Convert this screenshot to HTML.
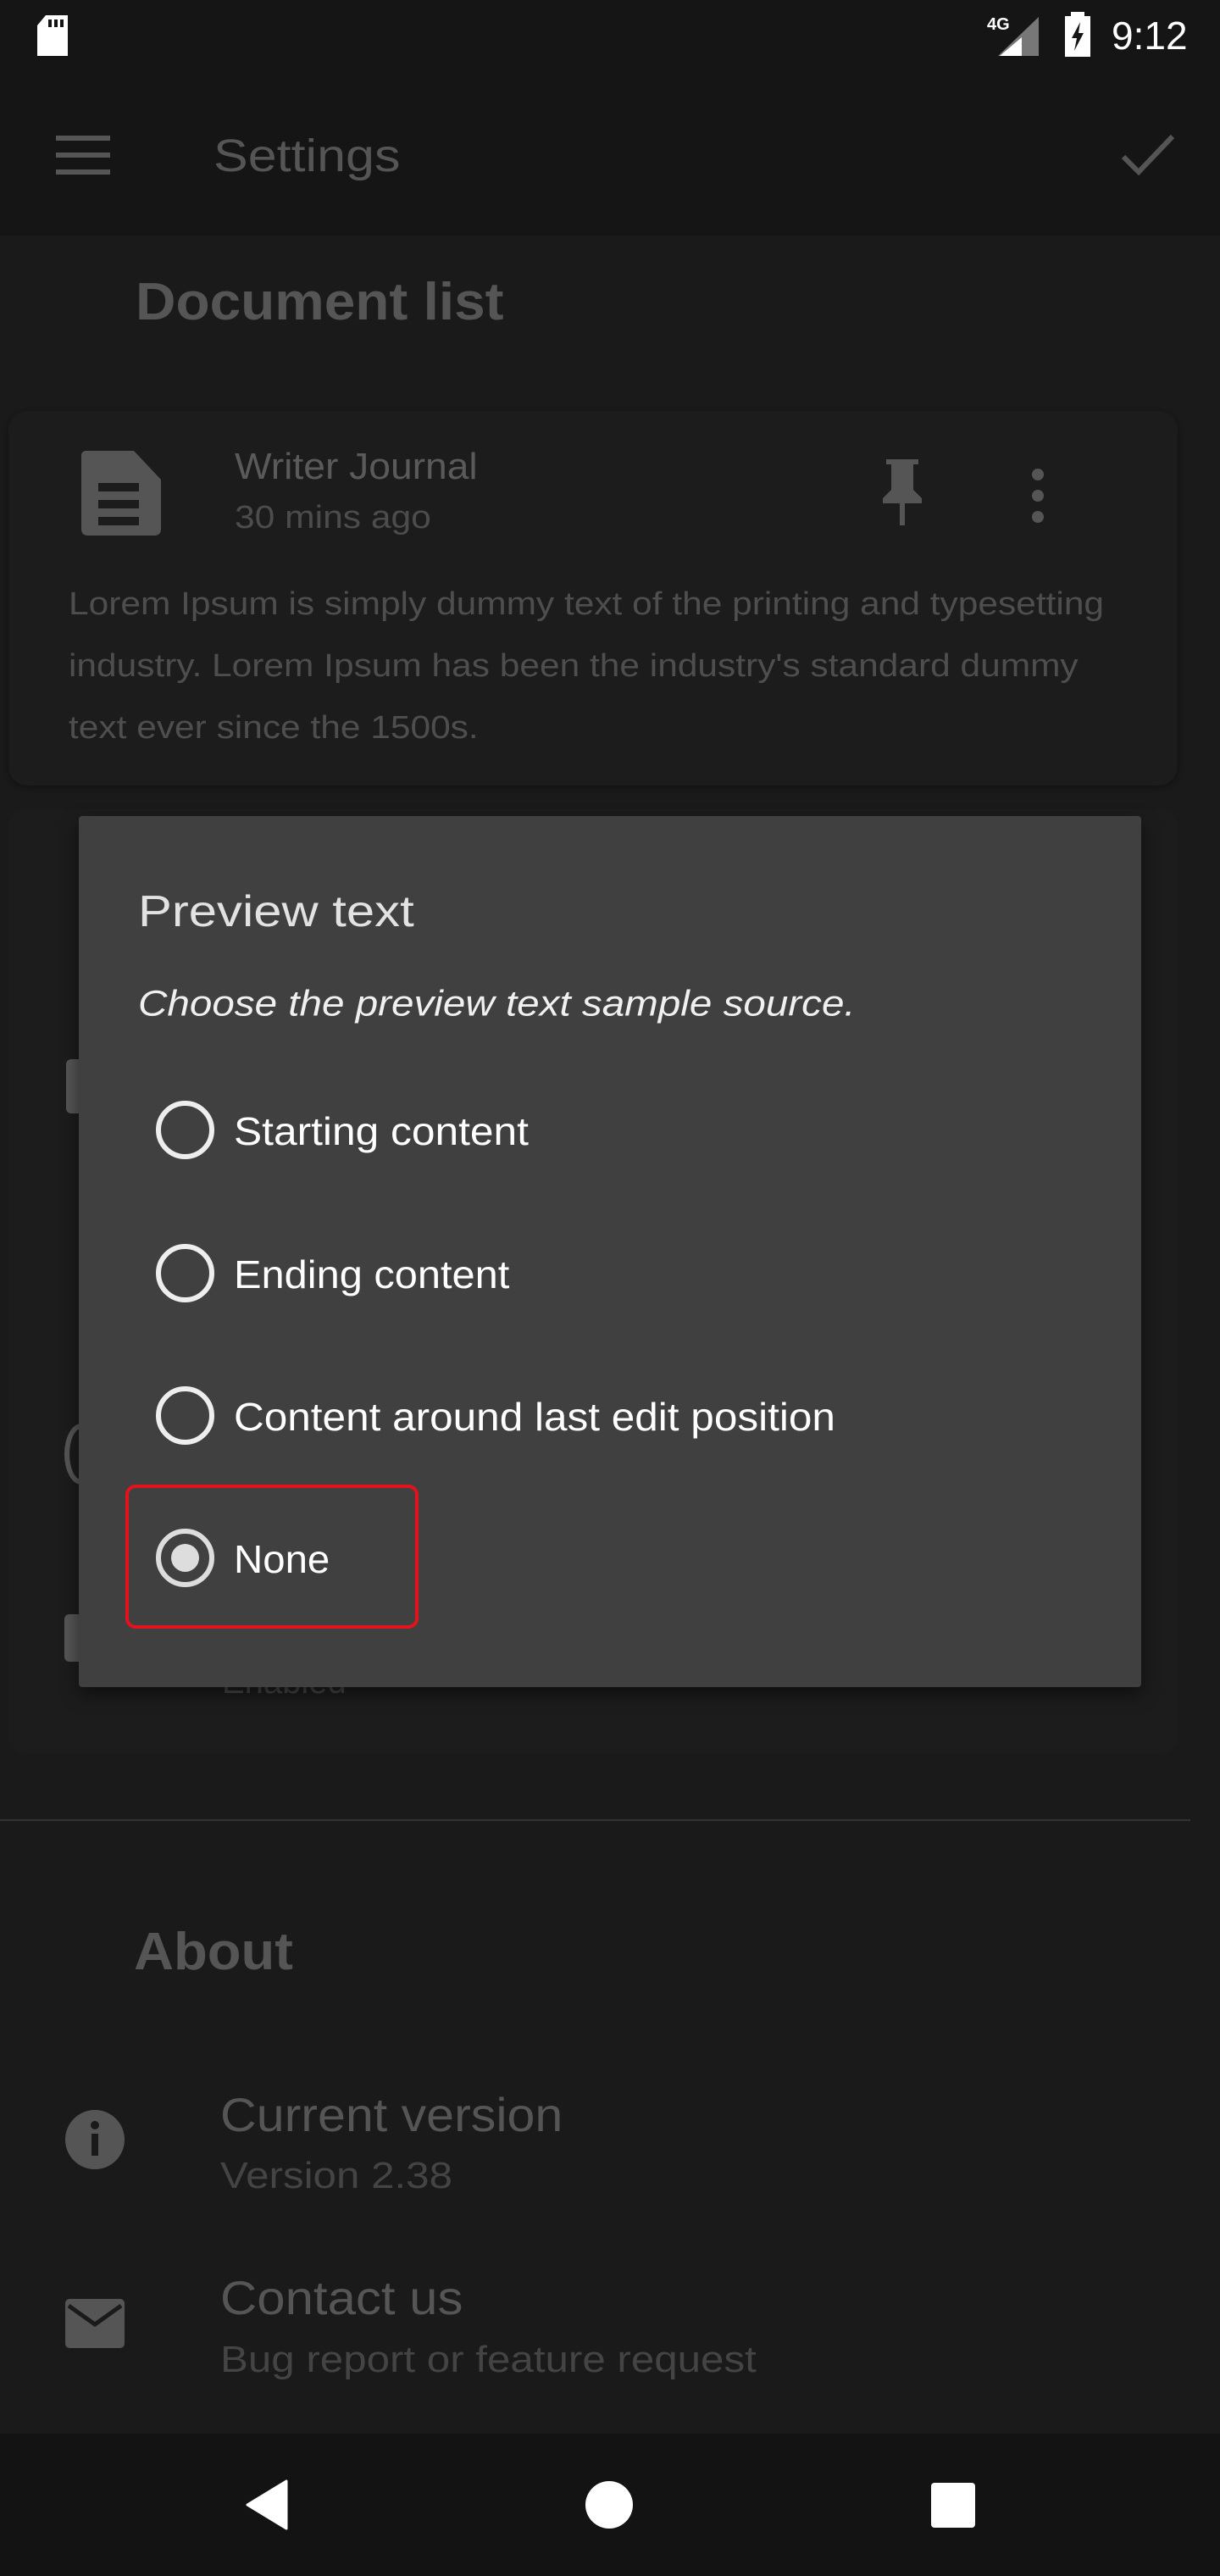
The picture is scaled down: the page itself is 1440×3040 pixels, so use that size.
<!DOCTYPE html>
<html><head><meta charset="utf-8"><style>
*{margin:0;padding:0;box-sizing:border-box}
body{width:1440px;height:3040px;background:#1a1a1a;font-family:"Liberation Sans",sans-serif;position:relative;overflow:hidden}
.a{position:absolute;white-space:nowrap}
.t{line-height:1;transform-origin:left center}
</style></head><body>
<div class="a" style="left:0;top:0;width:1440px;height:278px;background:#151515"></div>
<!-- status bar -->
<svg class="a" style="left:40px;top:16px" width="44" height="52" viewBox="0 0 44 52"><path d="M14 2H40V50H4V14Z" fill="#fff"/><rect x="17" y="7" width="4" height="9" fill="#151515"/><rect x="24" y="7" width="4" height="9" fill="#151515"/><rect x="31" y="7" width="4" height="9" fill="#151515"/></svg>
<div class="a" style="left:1165px;top:18px;color:#fff;font-size:20px;font-weight:bold">4G</div>
<svg class="a" style="left:1176px;top:18px" width="52" height="50"><path d="M50 2V48H2Z" fill="#777"/><path d="M30 26V48H4Z" fill="#fff"/></svg>
<svg class="a" style="left:1255px;top:14px" width="34" height="54"><rect x="9" y="0" width="16" height="6" fill="#fff"/><rect x="2" y="5" width="30" height="48" fill="#fff"/><path d="M20 12L10 31H16L13 46L24 25H18Z" fill="#151515"/></svg>
<div class="a t" style="left:1312px;top:42px;color:#fff;font-size:46px;transform:translateY(-50%)">9:12</div>
<!-- toolbar -->
<svg class="a" style="left:64px;top:158px" width="70" height="50"><rect x="2" y="2" width="64" height="6" fill="#555"/><rect x="2" y="22" width="64" height="6" fill="#555"/><rect x="2" y="42" width="64" height="6" fill="#555"/></svg>
<div class="a t" style="left:252px;top:184px;color:#555;font-size:54px;transform:translateY(-50%) scaleX(1.13)">Settings</div>
<svg class="a" style="left:1320px;top:155px" width="70" height="60"><path d="M6 30L24 48L64 6" stroke="#555" stroke-width="6" fill="none"/></svg>
<!-- doc list -->
<div class="a t" style="left:160px;top:357px;color:#555;font-size:62px;font-weight:bold;transform:translateY(-50%) scaleX(1.06)">Document list</div>
<div class="a" style="left:10px;top:485px;width:1380px;height:442px;background:#1c1c1c;border-radius:22px;box-shadow:0 2px 6px #111"></div>
<svg class="a" style="left:96px;top:532px" width="96" height="100" viewBox="0 0 96 100"><path d="M6 0H62L94 34V92Q94 100 86 100H8Q0 100 0 92V6Q0 0 6 0Z" fill="#555"/><rect x="20" y="38" width="48" height="10" fill="#1c1c1c"/><rect x="20" y="58" width="48" height="10" fill="#1c1c1c"/><rect x="20" y="78" width="48" height="10" fill="#1c1c1c"/></svg>
<div class="a t" style="left:277px;top:551px;color:#5a5a5a;font-size:44px;transform:translateY(-50%) scaleX(1.05)">Writer Journal</div>
<div class="a t" style="left:277px;top:611px;color:#4c4c4c;font-size:38px;transform:translateY(-50%) scaleX(1.12)">30 mins ago</div>
<svg class="a" style="left:1036px;top:540px" width="58" height="82"><path d="M10 2H48V8H42V38L52 48V54H6V48L16 38V8H10Z" fill="#555"/><rect x="26" y="54" width="6" height="26" fill="#555"/></svg>
<svg class="a" style="left:1212px;top:550px" width="26" height="70"><circle cx="13" cy="10" r="7" fill="#555"/><circle cx="13" cy="35" r="7" fill="#555"/><circle cx="13" cy="60" r="7" fill="#555"/></svg>
<div class="a" style="left:81px;top:677px;color:#4e4e4e;font-size:38px;line-height:73px;transform:scaleX(1.117);transform-origin:left top">Lorem Ipsum is simply dummy text of the printing and typesetting<br>industry. Lorem Ipsum has been the industry's standard dummy<br>text ever since the 1500s.</div>
<!-- second card behind -->
<div class="a" style="left:10px;top:955px;width:1380px;height:1115px;background:#1c1c1c;border-radius:22px"></div>
<div class="a" style="left:78px;top:1250px;width:30px;height:64px;background:#555;border-radius:6px"></div>
<div class="a" style="left:76px;top:1680px;width:40px;height:72px;border:6px solid #555;border-radius:50%"></div>
<div class="a" style="left:76px;top:1905px;width:30px;height:56px;background:#555;border-radius:6px"></div>
<div class="a t" style="left:262px;top:1985px;color:#444;font-size:40px;transform:translateY(-50%)">Enabled</div>
<!-- dialog -->
<div class="a" style="left:93px;top:963px;width:1254px;height:1028px;background:#404040;border-radius:4px;box-shadow:0 8px 20px rgba(0,0,0,.5)"></div>
<div class="a t" style="left:163px;top:1076px;color:#e2e2e2;font-size:52px;transform:translateY(-50%) scaleX(1.15)">Preview text</div>
<div class="a t" style="left:163px;top:1185px;color:#f0f0f0;font-size:43px;font-style:italic;transform:translateY(-50%) scaleX(1.107)">Choose the preview text sample source.</div>
<div class="a" style="left:184px;top:1299px;width:69px;height:69px;border:6px solid #eee;border-radius:50%"></div>
<div class="a t" style="left:276px;top:1335px;color:#fff;font-size:46px;transform:translateY(-50%) scaleX(1.08)">Starting content</div>
<div class="a" style="left:184px;top:1468px;width:69px;height:69px;border:6px solid #eee;border-radius:50%"></div>
<div class="a t" style="left:276px;top:1504px;color:#fff;font-size:46px;transform:translateY(-50%) scaleX(1.06)">Ending content</div>
<div class="a" style="left:184px;top:1636px;width:69px;height:69px;border:6px solid #eee;border-radius:50%"></div>
<div class="a t" style="left:276px;top:1672px;color:#fff;font-size:46px;transform:translateY(-50%) scaleX(1.076)">Content around last edit position</div>
<div class="a" style="left:184px;top:1804px;width:69px;height:69px;border:6px solid #ddd;border-radius:50%"></div>
<div class="a" style="left:202px;top:1822px;width:33px;height:33px;background:#ddd;border-radius:50%"></div>
<div class="a t" style="left:276px;top:1840px;color:#fff;font-size:46px;transform:translateY(-50%) scaleX(1.03)">None</div>
<div class="a" style="left:148px;top:1752px;width:346px;height:170px;border:4px solid #e3121c;border-radius:12px"></div>
<!-- about -->
<div class="a" style="left:0;top:2147px;width:1405px;height:2px;background:#333"></div>
<div class="a t" style="left:158px;top:2304px;color:#555;font-size:62px;font-weight:bold;transform:translateY(-50%) scaleX(1.05)">About</div>
<svg class="a" style="left:77px;top:2490px" width="70" height="70"><circle cx="35" cy="35" r="35" fill="#555"/><circle cx="35" cy="18" r="5" fill="#1a1a1a"/><rect x="31" y="28" width="8" height="26" fill="#1a1a1a"/></svg>
<div class="a t" style="left:260px;top:2496px;color:#555;font-size:56px;transform:translateY(-50%) scaleX(1.056)">Current version</div>
<div class="a t" style="left:260px;top:2568px;color:#444;font-size:44px;transform:translateY(-50%) scaleX(1.12)">Version 2.38</div>
<svg class="a" style="left:77px;top:2713px" width="70" height="58"><rect x="0" y="0" width="70" height="58" rx="5" fill="#555"/><path d="M4 8L35 30L66 8" stroke="#1a1a1a" stroke-width="5" fill="none"/></svg>
<div class="a t" style="left:260px;top:2712px;color:#555;font-size:56px;transform:translateY(-50%) scaleX(1.07)">Contact us</div>
<div class="a t" style="left:260px;top:2785px;color:#444;font-size:44px;transform:translateY(-50%) scaleX(1.12)">Bug report or feature request</div>
<!-- nav -->
<div class="a" style="left:0;top:2872px;width:1440px;height:168px;background:#131313"></div>
<svg class="a" style="left:288px;top:2926px" width="54" height="60"><path d="M50 2V58L4 30Z" fill="#fff" stroke="#fff" stroke-width="3" stroke-linejoin="round"/></svg>
<div class="a" style="left:691px;top:2928px;width:56px;height:56px;background:#fff;border-radius:50%"></div>
<div class="a" style="left:1099px;top:2930px;width:52px;height:53px;background:#fff;border-radius:4px"></div>
</body></html>
